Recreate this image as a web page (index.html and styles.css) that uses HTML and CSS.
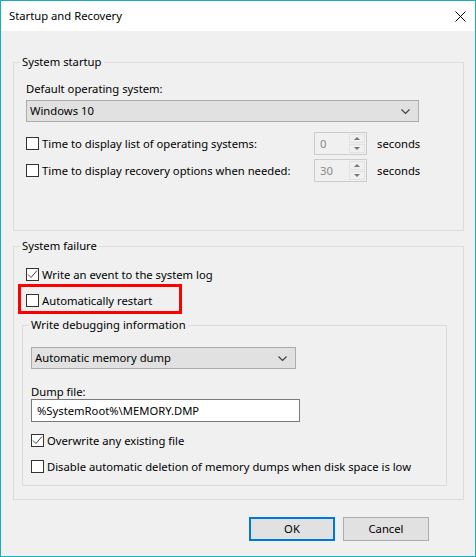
FILE: index.html
```html
<!DOCTYPE html>
<html>
<head>
<meta charset="utf-8">
<link rel="stylesheet" href="styles.css">
</head>
<body>
<div class="window">
  <div class="titlebar">
    <span class="title">Startup and Recovery</span>
    <svg class="close" width="11" height="11" viewBox="0 0 11 11"><path d="M0.5 0.5 L10.5 10.5 M10.5 0.5 L0.5 10.5" stroke="#000" stroke-width="1" fill="none"/></svg>
  </div>
  <div class="content">
    <fieldset class="grp startup">
      <legend>System startup</legend>
      <div class="inner">
        <div class="lbl first">Default operating system:</div>
        <div class="select os">
          <span>Windows 10</span>
          <svg class="chev" width="9" height="5" viewBox="0 0 9 5"><path d="M0.5 0.5 L4.5 4.5 L8.5 0.5" stroke="#444" stroke-width="1.2" fill="none"/></svg>
        </div>
        <div class="spinrow r1">
          <span class="cb"></span>
          <span class="spinlbl">Time to display list of operating systems:</span>
          <div class="spin"><span class="val">0</span><span class="btns"><span class="up"></span><span class="down"></span></span></div>
          <span class="unit">seconds</span>
        </div>
        <div class="spinrow r2">
          <span class="cb"></span>
          <span class="spinlbl">Time to display recovery options when needed:</span>
          <div class="spin"><span class="val">30</span><span class="btns"><span class="up"></span><span class="down"></span></span></div>
          <span class="unit">seconds</span>
        </div>
      </div>
    </fieldset>

    <fieldset class="grp failure">
      <legend>System failure</legend>
      <div class="inner">
        <div class="check ev">
          <span class="cb checked"><svg width="11" height="11" viewBox="0 0 11 11"><path d="M1 5.5 L4 8.5 L10 1.5" stroke="#444" stroke-width="1" fill="none"/></svg></span>
          <span>Write an event to the system log</span>
        </div>
        <div class="check restart">
          <span class="cb"></span>
          <span>Automatically restart</span>
          <span class="highlight"></span>
        </div>
        <fieldset class="grp debug">
          <legend>Write debugging information</legend>
          <div class="inner">
            <div class="select dump">
              <span>Automatic memory dump</span>
              <svg class="chev" width="9" height="5" viewBox="0 0 9 5"><path d="M0.5 0.5 L4.5 4.5 L8.5 0.5" stroke="#444" stroke-width="1.2" fill="none"/></svg>
            </div>
            <div class="lbl dumplbl">Dump file:</div>
            <div class="textbox">%SystemRoot%\MEMORY.DMP</div>
            <div class="check ow">
              <span class="cb checked"><svg width="11" height="11" viewBox="0 0 11 11"><path d="M1 5.5 L4 8.5 L10 1.5" stroke="#444" stroke-width="1" fill="none"/></svg></span>
              <span>Overwrite any existing file</span>
            </div>
            <div class="check dis">
              <span class="cb"></span>
              <span>Disable automatic deletion of memory dumps when disk space is low</span>
            </div>
          </div>
        </fieldset>
      </div>
    </fieldset>

    <div class="buttons">
      <div class="btn default">OK</div>
      <div class="btn">Cancel</div>
    </div>
  </div>
</div>
</body>
</html>
```

FILE: styles.css
```css
* { box-sizing: border-box; }
html, body { margin: 0; padding: 0; }
body {
  font-family: "Noto Sans", "Open Sans", sans-serif;
  font-size: 11.25px;
  line-height: 16px;
  color: #000;
  background: #f0f0f0;
}
.window {
  width: 476px;
  height: 557px;
  border: 1px solid #1aadbd;
  background: #f0f0f0;
  display: flex;
  flex-direction: column;
}
.titlebar {
  height: 30px;
  background: #fff;
  display: flex;
  align-items: center;
  justify-content: space-between;
  padding: 0 9px 0 8px;
  flex: none;
}
.title { font-size: 11.25px; }
.content {
  flex: 1;
  padding: 0 11px 0 12px;
  display: flex;
  flex-direction: column;
}
.grp {
  margin: 0;
  padding: 0;
  border: 1px solid #dcdcdc;
  min-width: 0;
}
.grp legend {
  padding: 0 2px;
  margin-left: 6px;
  line-height: 16px;
  height: 16px;
}
.startup { margin-top: 23px; }
.startup .inner { padding: 11px 12px 48px 12px; }
.lbl { height: 16px; }
.select {
  height: 22px;
  background: #e1e1e1;
  border: 1px solid #adadad;
  display: flex;
  align-items: center;
  justify-content: space-between;
  padding: 0 4px 0 3px;
}
.select .chev { margin-right: 4px; }
.os { width: 393px; margin-top: 3px; }
.spinrow {
  height: 23px;
  display: flex;
  align-items: center;
}
.r1 { margin-top: 10px; }
.r2 { margin-top: 4px; }
.cb {
  width: 13px;
  height: 13px;
  border: 1px solid #333;
  background: #fff;
  flex: none;
  margin-right: 3px;
  display: flex;
  align-items: center;
  justify-content: center;
}
.cb svg { display: block; }
.spinlbl { width: 272px; }
.spin {
  width: 53px;
  height: 23px;
  border: 1px solid #cccccc;
  background: #f0f0f0;
  display: flex;
  justify-content: space-between;
  padding: 1px;
}
.spin .val { color: #8a8a8a; padding-left: 4px; line-height: 19px; }
.btns {
  width: 16px;
  display: flex;
  flex-direction: column;
  gap: 1px;
}
.btns span {
  flex: 1;
  border: 1px solid #e2e2e2;
  background: #f0f0f0;
  display: flex;
  align-items: center;
  justify-content: center;
}
.btns .up::after {
  content: "";
  border-left: 3px solid transparent;
  border-right: 3px solid transparent;
  border-bottom: 3px solid #777;
}
.btns .down::after {
  content: "";
  border-left: 3px solid transparent;
  border-right: 3px solid transparent;
  border-top: 3px solid #777;
}
.unit { margin-left: 10px; }

.failure { margin-top: 7px; }
.failure .inner { padding: 0 8px 13px 8px; }
.failure > .inner > .check { margin-left: 4px; }
.check {
  height: 17px;
  display: flex;
  align-items: center;
  position: relative;
}
.ev { margin-top: 12px; }
.restart { margin-top: 9px; }
.highlight {
  position: absolute;
  left: -8px;
  top: -8px;
  width: 164px;
  height: 30px;
  border: 3px solid #f00;
}
.debug {
  margin: 8px 8px 0 0;
  width: 425px;
}
.debug .inner { padding: 14px 8px 10px 8px; }
.dump { width: 265px; }
.dumplbl { margin-top: 15px; height: 15px; line-height: 15px; }
.textbox {
  width: 269px;
  height: 23px;
  background: #fff;
  border: 1px solid #7a7a7a;
  padding-left: 5px;
  line-height: 21px;
}
.ow { margin-top: 10px; }
.dis { margin-top: 9px; }

.buttons {
  margin-top: 17px;
  display: flex;
  justify-content: flex-end;
  gap: 8px;
  padding-right: 35px;
}
.btn {
  width: 86px;
  height: 24px;
  background: #e1e1e1;
  border: 1px solid #adadad;
  display: flex;
  align-items: center;
  justify-content: center;
}
.btn.default { border: 2px solid #0078d7; }
```
